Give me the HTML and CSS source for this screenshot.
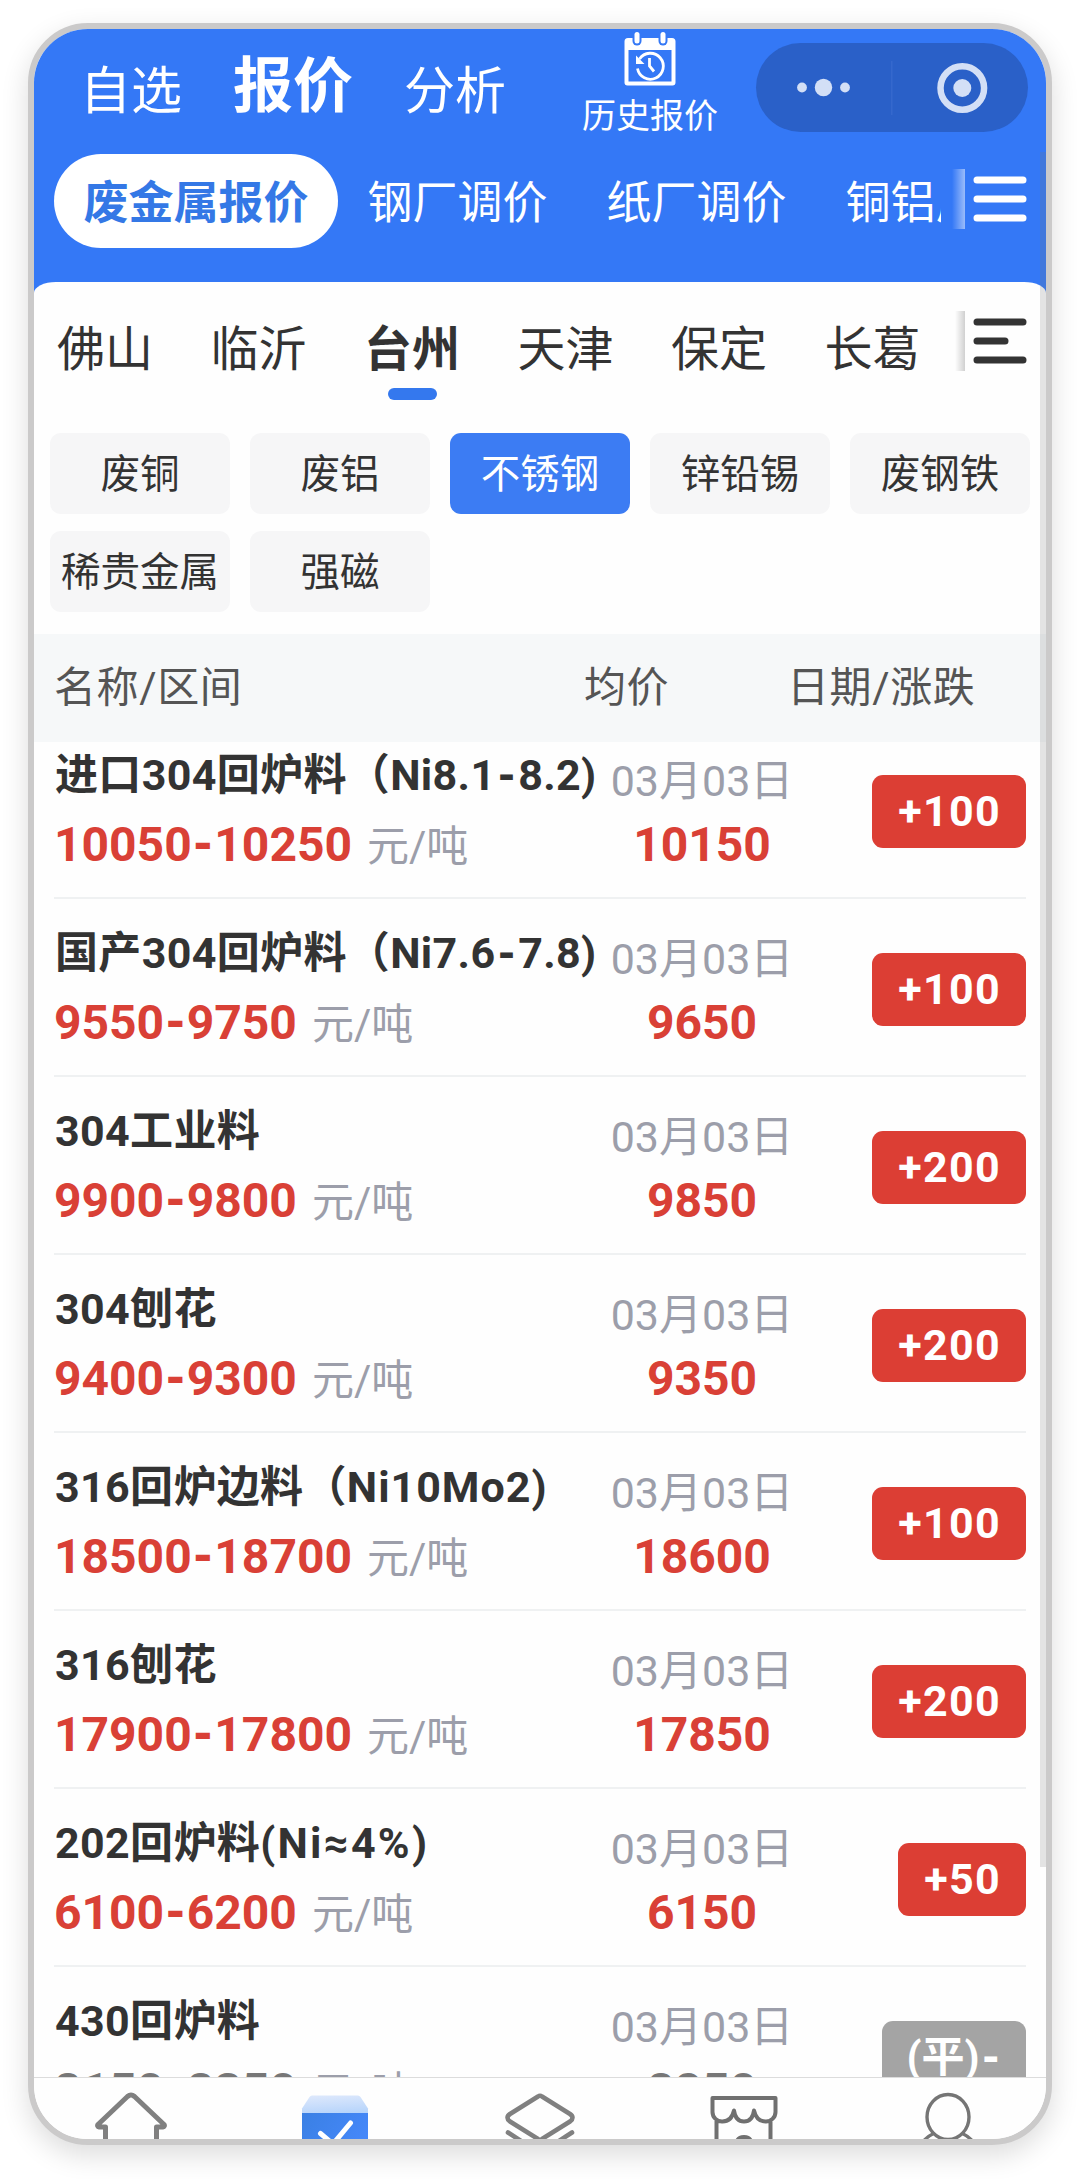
FILE: index.html
```html
<!DOCTYPE html>
<html lang="zh-CN">
<head>
<meta charset="utf-8">
<title>报价</title>
<link rel="stylesheet" href="styles.css">
</head>
<body>
<div class="phone">
  <header class="header">
    <div class="topbar">
      <nav class="main-tabs">
        <a class="main-tab">自选</a>
        <a class="main-tab main-tab-active">报价</a>
        <a class="main-tab">分析</a>
      </nav>
      <div class="history">
        <svg class="history-icon" viewBox="0 0 52 54" width="52" height="54">
          <path d="M4 6h44a3.500 3.500 0 0 1 3.500 3.500V50.500a3 3 0 0 1-3 3H3.500a3 3 0 0 1-3-3V9.500A3.500 3.500 0 0 1 4 6z" fill="#fff"/>
          <rect x="4.500" y="18" width="43" height="31.500" fill="#3478f6"/>
          <rect x="8.500" y="-3" width="9" height="16.500" rx="4.500" fill="#3478f6"/>
          <rect x="34.500" y="-3" width="9" height="16.500" rx="4.500" fill="#3478f6"/>
          <rect x="10.500" y="0" width="5" height="11.500" rx="2.500" fill="#fff"/>
          <rect x="36.500" y="0" width="5" height="11.500" rx="2.500" fill="#fff"/>
          <path d="M15.500 27A13 13 0 1 1 13.500 36.500M25.500 26v8l4.500 5.500" fill="none" stroke="#fff" stroke-width="2.800"/>
          <path d="M12 23.500v8.500h8.500z" fill="#fff"/>
        </svg>
        <span class="history-label">历史报价</span>
      </div>
      <div class="capsule">
        <svg viewBox="0 0 272 89" width="272" height="89" fill="#d3dff6">
          <circle cx="46" cy="44.500" r="4.900"/><circle cx="67.500" cy="44.500" r="8.700"/><circle cx="89" cy="44.500" r="4.900"/>
          <rect x="135" y="18" width="1.500" height="54" fill="#3568cd"/>
          <circle cx="206.300" cy="45" r="21.800" fill="none" stroke="#d3dff6" stroke-width="6.500"/><circle cx="206.300" cy="45" r="9"/>
        </svg>
      </div>
    </div>
    <div class="sub-row">
      <nav class="pills">
        <a class="pill pill-active">废金属报价</a>
        <a class="pill">钢厂调价</a>
        <a class="pill">纸厂调价</a>
        <a class="pill">铜铝厂调价</a>
      </nav>
      <i class="fade fade-light"></i>
      <svg class="menu" viewBox="0 0 54 46" width="54" height="46" stroke="#fff" stroke-width="7" stroke-linecap="round"><path d="M4 4h46M4 23h46M4 42h46"/></svg>
    </div>
  </header>

  <main class="panel">
    <div class="city-row">
      <nav class="cities">
        <a class="city">佛山</a>
        <a class="city">临沂</a>
        <a class="city city-active">台州</a>
        <a class="city">天津</a>
        <a class="city">保定</a>
        <a class="city">长葛</a>
      </nav>
      <i class="fade fade-dark"></i>
      <svg class="menu" viewBox="0 0 54 46" width="54" height="46" stroke="#333" stroke-width="7" stroke-linecap="round"><path d="M4 4h46M4 23h28M4 42h46"/></svg>
    </div>
    <div class="chips">
      <span class="chip">废铜</span>
      <span class="chip">废铝</span>
      <span class="chip chip-active">不锈钢</span>
      <span class="chip">锌铅锡</span>
      <span class="chip">废钢铁</span>
      <span class="chip">稀贵金属</span>
      <span class="chip">强磁</span>
    </div>
    <div class="table-head">
      <span>名称/区间</span><span>均价</span><span>日期/涨跌</span>
    </div>
    <div class="list-view">
      <div class="list">
        <div class="row">
          <div><div class="name">进口304回炉料（Ni8.1<b class="dash">-</b>8.2)</div><div class="range">10050<b class="dash">-</b>10250<span class="unit">元/吨</span></div></div>
          <div class="mid"><div class="date">03月03日</div><div class="price">10150</div></div>
          <span class="badge">+100</span>
        </div>
        <div class="row">
          <div><div class="name">国产304回炉料（Ni7.6<b class="dash">-</b>7.8)</div><div class="range">9550<b class="dash">-</b>9750<span class="unit">元/吨</span></div></div>
          <div class="mid"><div class="date">03月03日</div><div class="price">9650</div></div>
          <span class="badge">+100</span>
        </div>
        <div class="row">
          <div><div class="name">304工业料</div><div class="range">9900<b class="dash">-</b>9800<span class="unit">元/吨</span></div></div>
          <div class="mid"><div class="date">03月03日</div><div class="price">9850</div></div>
          <span class="badge">+200</span>
        </div>
        <div class="row">
          <div><div class="name">304刨花</div><div class="range">9400<b class="dash">-</b>9300<span class="unit">元/吨</span></div></div>
          <div class="mid"><div class="date">03月03日</div><div class="price">9350</div></div>
          <span class="badge">+200</span>
        </div>
        <div class="row">
          <div><div class="name">316回炉边料（<span class="grade">Ni10Mo2)</span></div><div class="range">18500<b class="dash">-</b>18700<span class="unit">元/吨</span></div></div>
          <div class="mid"><div class="date">03月03日</div><div class="price">18600</div></div>
          <span class="badge">+100</span>
        </div>
        <div class="row">
          <div><div class="name">316刨花</div><div class="range">17900<b class="dash">-</b>17800<span class="unit">元/吨</span></div></div>
          <div class="mid"><div class="date">03月03日</div><div class="price">17850</div></div>
          <span class="badge">+200</span>
        </div>
        <div class="row">
          <div><div class="name">202回炉料<span class="grade grade-wide">(Ni≈4%)</span></div><div class="range">6100<b class="dash">-</b>6200<span class="unit">元/吨</span></div></div>
          <div class="mid"><div class="date">03月03日</div><div class="price">6150</div></div>
          <span class="badge">+50</span>
        </div>
        <div class="row row-flat">
          <div><div class="name">430回炉料</div><div class="range">8150<b class="dash">-</b>8350<span class="unit">元/吨</span></div></div>
          <div class="mid"><div class="date">03月03日</div><div class="price">8250</div></div>
          <span class="badge">(平)<b class="dash">-</b></span>
        </div>
      </div>
    </div>
  </main>

  <nav class="tabbar">
    <svg viewBox="0 0 72 72" width="72" height="72" fill="none" stroke="#808080" stroke-width="5" stroke-linejoin="round"><path d="M10.500 70V35H4a1.500 1.500 0 0 1-1-2.500L32.500 4.500q3.500-3 7 0L69 32.500a1.500 1.500 0 0 1-1 2.500H61.500V70"/></svg>
    <svg viewBox="0 0 72 72" width="72" height="72">
      <defs>
        <linearGradient id="lid" x1="0" y1="0" x2="0.200" y2="1"><stop offset="0" stop-color="#dfe9fc"/><stop offset="1" stop-color="#b4d3fb"/></linearGradient>
        <linearGradient id="box" x1="0" y1="0" x2="1" y2="0.500"><stop offset="0" stop-color="#3a80e4"/><stop offset="1" stop-color="#4688fa"/></linearGradient>
      </defs>
      <path d="M13 3.500H59Q60.500 3.500 61.500 5L69 16.500V24H3V16.500L10.500 5Q11.500 3.500 13 3.500z" fill="url(#lid)"/>
      <rect x="3" y="21" width="66" height="51" fill="url(#box)"/>
      <path d="M21.500 41.500L34 52L51.500 31" fill="none" stroke="#fff" stroke-width="5" stroke-linecap="round"/>
    </svg>
    <svg viewBox="0 0 72 72" width="72" height="72" fill="none" stroke="#808080" stroke-width="4.600" stroke-linejoin="round" stroke-linecap="round"><path d="M34 4.500q2-1.500 4 0L66 22q5 3.500 0 7.500L38 47q-2 1.500-4 0L6 29.500q-5-4 0-7.500zM4 40.500L34 60q2 1.300 4 0L68 40.500"/></svg>
    <svg viewBox="0 0 72 72" width="72" height="72" fill="none" stroke="#707070" stroke-width="4" stroke-linejoin="round"><path d="M4.500 6H67.500V20a9.500 9.500 0 0 1-10 9.500q-9 0-11.500-11q-1.500 11-10 11q-8.500 0-10-11q-2.500 11-11.500 11A9.500 9.500 0 0 1 4.500 20zM8.500 27V70M62.500 27V70M28 55q0-10 8-10t8 10"/></svg>
    <svg viewBox="0 0 72 72" width="72" height="72" fill="none" stroke="#757575" stroke-width="3.400"><ellipse cx="36" cy="25" rx="21" ry="22.500"/><path d="M22.500 41Q8 48 5 62M49.500 41Q64 48 67 62"/></svg>
  </nav>
  <i class="scrollbar"></i>
</div>
</body>
</html>
```
FILE: styles.css
```css
* { box-sizing: border-box; }
body {
  margin: 0;
  padding: 23px 28px 0;
  height: 2179px;
  overflow: hidden;
  background: #fff;
  font-family: "Noto Sans CJK SC", sans-serif;
}
.phone {
  position: relative;
  display: flex;
  flex-direction: column;
  height: 2122px;
  border: 6px solid #cbcaca;
  border-radius: 60px;
  overflow: hidden;
  background: #fefefe;
  box-shadow: 0 10px 28px rgba(0, 0, 0, 0.14);
}
.phone svg { display: block; flex: none; }

.header {
  flex: none;
  height: 275px;
  background: #3478f6;
  color: #fff;
}
.topbar {
  display: flex;
  align-items: flex-start;
  height: 125px;
}
.main-tabs {
  display: flex;
  gap: 51px;
  width: 548px;
  padding-left: 46px;
}
.main-tab {
  margin-top: 28px;
  font-size: 51px;
  line-height: 60px;
  white-space: nowrap;
}
.main-tab-active {
  margin-top: 22px;
  font-size: 60px;
  font-weight: 700;
}
.history {
  display: flex;
  flex-direction: column;
  align-items: center;
  gap: 8px;
  width: 136px;
  padding-top: 3px;
}
.history-label {
  font-size: 34px;
  line-height: 40px;
  white-space: nowrap;
}
.capsule {
  width: 272px;
  height: 89px;
  margin: 14px 0 0 38px;
  border-radius: 45px;
  background: #2a60c8;
}
.sub-row {
  display: flex;
  align-items: flex-start;
  padding-left: 20px;
}
.pills {
  display: flex;
  width: 887px;
  overflow: hidden;
}
.pill {
  flex: none;
  padding: 0 29.500px;
  border-radius: 47px;
  font-size: 45px;
  line-height: 91px;
  height: 94px;
}
.pill-active {
  background: #fff;
  color: #3478e6;
  font-weight: 700;
}
.fade {
  width: 13px;
  height: 60px;
  margin: 15px 8px 0 11px;
}
.fade-light { background: linear-gradient(90deg, rgba(255, 255, 255, 0), rgba(255, 255, 255, 0.500)); }
.fade-dark {
  width: 10px;
  margin: 29px 8px 0 14px;
  background: linear-gradient(90deg, rgba(0, 0, 0, 0), rgba(0, 0, 0, 0.180));
}
.menu { margin-top: 22px; }

.panel {
  flex: 1;
  display: flex;
  flex-direction: column;
  min-height: 0;
  margin-top: -22px;
  border-radius: 22px 22px 0 0 / 11px 11px 0 0;
  background: #fefefe;
}
.city-row {
  display: flex;
  align-items: flex-start;
  height: 151px;
  padding-left: 23px;
  color: #333;
}
.city-row .menu { margin-top: 36px; }
.cities {
  display: flex;
  gap: 57.500px;
  width: 884px;
  padding-top: 33px;
}
.city {
  display: flex;
  flex-direction: column;
  align-items: center;
  font-size: 48px;
  line-height: 60px;
}
.city-active { font-weight: 700; }
.city-active::after {
  content: "";
  width: 49px;
  height: 12px;
  margin-top: 13px;
  border-radius: 6px;
  background: #3478ee;
}
.chips {
  display: grid;
  grid-template-columns: repeat(5, 180px);
  grid-auto-rows: 81px;
  gap: 17px 20px;
  height: 201px;
  padding-left: 16px;
}
.chip {
  border-radius: 11px;
  background: #f6f6f7;
  color: #333;
  font-size: 39.500px;
  line-height: 76px;
  text-align: center;
}
.chip-active {
  background: #3c7cf3;
  color: #fff;
}

.table-head {
  display: grid;
  grid-template-columns: 530px 203px 1fr;
  flex: none;
  height: 108px;
  padding-left: 20px;
  background: #f6f8f9;
  color: #555;
  font-family: Roboto, "Noto Sans CJK SC", sans-serif;
  font-size: 42px;
  letter-spacing: 0.600px;
  line-height: 108px;
}
.list-view {
  flex: 1;
  min-height: 0;
  overflow: hidden;
  font-family: Roboto, "Noto Sans CJK SC", sans-serif;
}
.list {
  margin-top: -21.500px;
  padding: 0 20px;
}
.row {
  display: grid;
  grid-template-columns: 556px 184px 1fr;
  height: 178.150px;
  border-bottom: 2px solid #eff1f2;
  white-space: nowrap;
}
.name {
  margin-top: 29px;
  padding-left: 1px;
  color: #333;
  font-size: 43px;
  font-weight: 700;
  letter-spacing: 0.350px;
  line-height: 50px;
}
.grade { letter-spacing: 1px; }
.grade-wide { letter-spacing: 2.300px; }
.dash { padding: 0 1.500px; }
.range, .price {
  color: #d94036;
  font-size: 48px;
  font-weight: 700;
  line-height: 56px;
}
.range { margin-top: 17px; }
.range .dash { padding: 0 0.500px; }
.unit {
  margin-left: 15px;
  color: #9c9eaa;
  font-size: 42px;
  font-weight: 400;
}
.mid {
  padding-top: 35px;
  text-align: center;
}
.date {
  color: #9c9eaa;
  font-size: 43px;
  line-height: 50px;
}
.price { margin-top: 11px; }
.badge {
  justify-self: end;
  height: 73px;
  margin-top: 54px;
  padding: 0 25px 0 26px;
  border-radius: 11px;
  background: #dc3e34;
  color: #fff;
  font-size: 43px;
  font-weight: 700;
  letter-spacing: 1.300px;
  line-height: 73px;
}
.row-flat .range, .row-flat .price { color: #777; }
.row-flat .badge {
  padding: 0 24px 0 25px;
  background: #a4a4a4;
  letter-spacing: 0;
}

.tabbar {
  display: flex;
  justify-content: space-between;
  flex: none;
  height: 62px;
  padding: 14px 62px 0 61px;
  overflow: hidden;
  border-top: 1px solid #dcdcdc;
  background: #fefefe;
}
.scrollbar {
  position: absolute;
  top: 123px;
  right: 0;
  width: 6px;
  height: 1715px;
  background: rgba(120, 120, 120, 0.200);
}
```
